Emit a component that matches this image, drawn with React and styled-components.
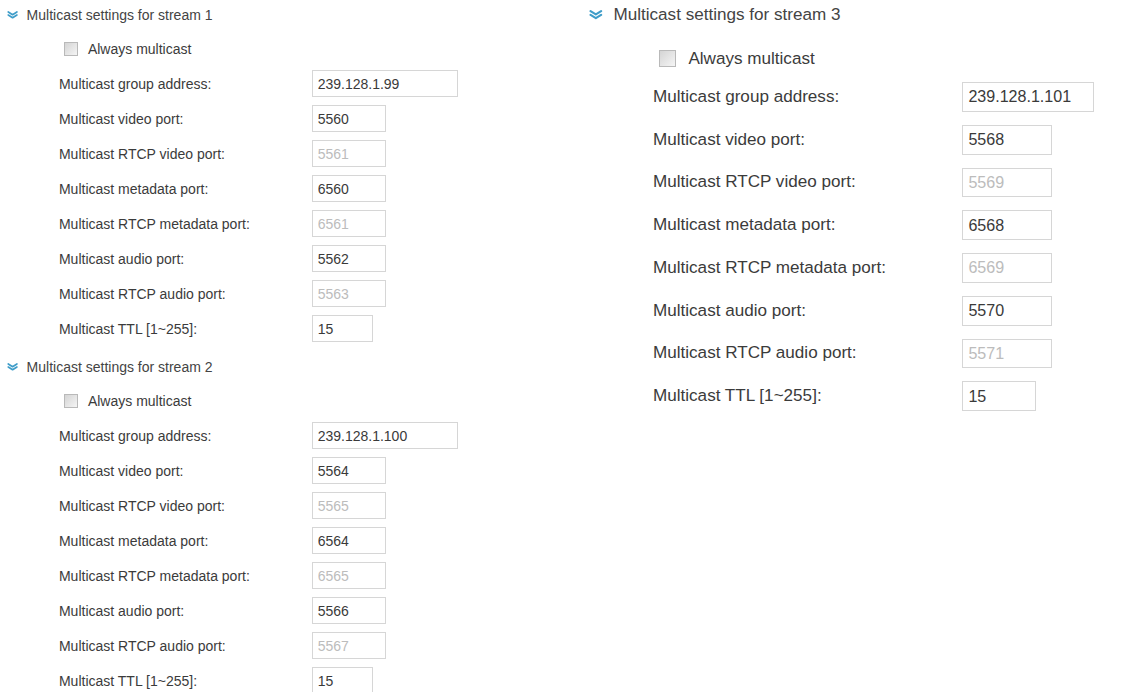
import React from 'react'
import styled, { createGlobalStyle } from 'styled-components'

const GlobalStyle = createGlobalStyle`
  body {
    margin: 0;
    background: #fff;
    font-family: "Liberation Sans", Arial, sans-serif;
    color: #3b3b3b;
  }
`

const Page = styled.div`
  display: grid;
  grid-template-columns: 581px 1fr;
  align-items: start;
  width: 1140px;
  height: 692px;
  overflow: hidden;
`

const Column = styled.div`
  display: flex;
  flex-direction: column;
  gap: 6px;
  font-size: ${p => p.$size}px;
`

const Section = styled.section`
  display: flex;
  flex-direction: column;
`

const Header = styled.div`
  display: flex;
  align-items: center;
  gap: 0.62em;
  height: ${p => p.$h}px;
  padding-left: 0.48em;
  color: #444;
`

const Chevron = styled.svg`
  width: 0.8em;
  height: 0.55em;
  flex: none;
`

const CheckRow = styled.label`
  display: flex;
  align-items: center;
  gap: 0.71em;
  box-sizing: border-box;
  height: ${p => p.$h}px;
  padding-top: ${p => p.$pad}px;
  padding-left: 4.57em;
`

const Box = styled.span`
  width: 1em;
  height: 1em;
  box-sizing: border-box;
  border: 1px solid #b9b9b9;
  background: linear-gradient(135deg, #d4d4d4, #f5f5f5);
`

const Row = styled.div`
  display: grid;
  grid-template-columns: 18.05em auto;
  align-items: center;
  height: 2.5em;
  padding-left: 4.21em;
`

const Field = styled.input`
  box-sizing: border-box;
  width: ${p => p.$w}em;
  height: 1.86em;
  margin: 0;
  padding: 0 0.36em;
  border: 1px solid #d6d6d6;
  background: #fff;
  font-family: inherit;
  font-size: ${p => p.$text}em;
  color: #3a3a3a;
  outline: none;

  &:disabled {
    color: #bcbcbc;
    background: #fff;
  }
`

const PORT = 5.29
const TTL = 4.36

const ArrowDown = () => (
  <Chevron viewBox="0 0 11 8">
    <path d="M1 1 L5.5 3.8 L10 1 M1 4.2 L5.5 7 L10 4.2" fill="none" stroke="#3f9dc9" strokeWidth="1.8" strokeLinejoin="round" strokeLinecap="round" />
  </Chevron>
)

const streamFields = n => {
  const k = (n - 1) * 4
  return [
    { label: 'Multicast group address:', value: `239.128.1.${99 + n - 1}`, wide: true },
    { label: 'Multicast video port:', value: 5560 + k },
    { label: 'Multicast RTCP video port:', value: 5561 + k, off: true },
    { label: 'Multicast metadata port:', value: 6560 + k },
    { label: 'Multicast RTCP metadata port:', value: 6561 + k, off: true },
    { label: 'Multicast audio port:', value: 5562 + k },
    { label: 'Multicast RTCP audio port:', value: 5563 + k, off: true },
    { label: 'Multicast TTL [1~255]:', value: 15, ttl: true },
  ]
}

const StreamSettings = ({ n, cfg }) => (
  <Section>
    <Header $h={cfg.headH}>
      <ArrowDown />
      <span>Multicast settings for stream {n}</span>
    </Header>
    <CheckRow $h={cfg.checkH} $pad={cfg.checkPad}>
      <Box />
      <span>Always multicast</span>
    </CheckRow>
    {streamFields(n).map(f => (
      <Row key={f.label}>
        <span>{f.label}</span>
        <Field
          readOnly
          disabled={f.off}
          value={f.value}
          $text={cfg.text}
          $w={(f.wide ? cfg.wide : f.ttl ? TTL : PORT) / cfg.text}
        />
      </Row>
    ))}
  </Section>
)

const small = { size: 14, headH: 30, checkH: 36, checkPad: 2, wide: 10.43, text: 1 }
const large = { size: 17.1, headH: 30, checkH: 45.6, checkPad: 12, wide: 7.72, text: 0.94 }

const App = () => (
  <>
    <GlobalStyle />
    <Page>
      <Column $size={small.size}>
        <StreamSettings n={1} cfg={small} />
        <StreamSettings n={2} cfg={small} />
      </Column>
      <Column $size={large.size}>
        <StreamSettings n={3} cfg={large} />
      </Column>
    </Page>
  </>
)

export default App
